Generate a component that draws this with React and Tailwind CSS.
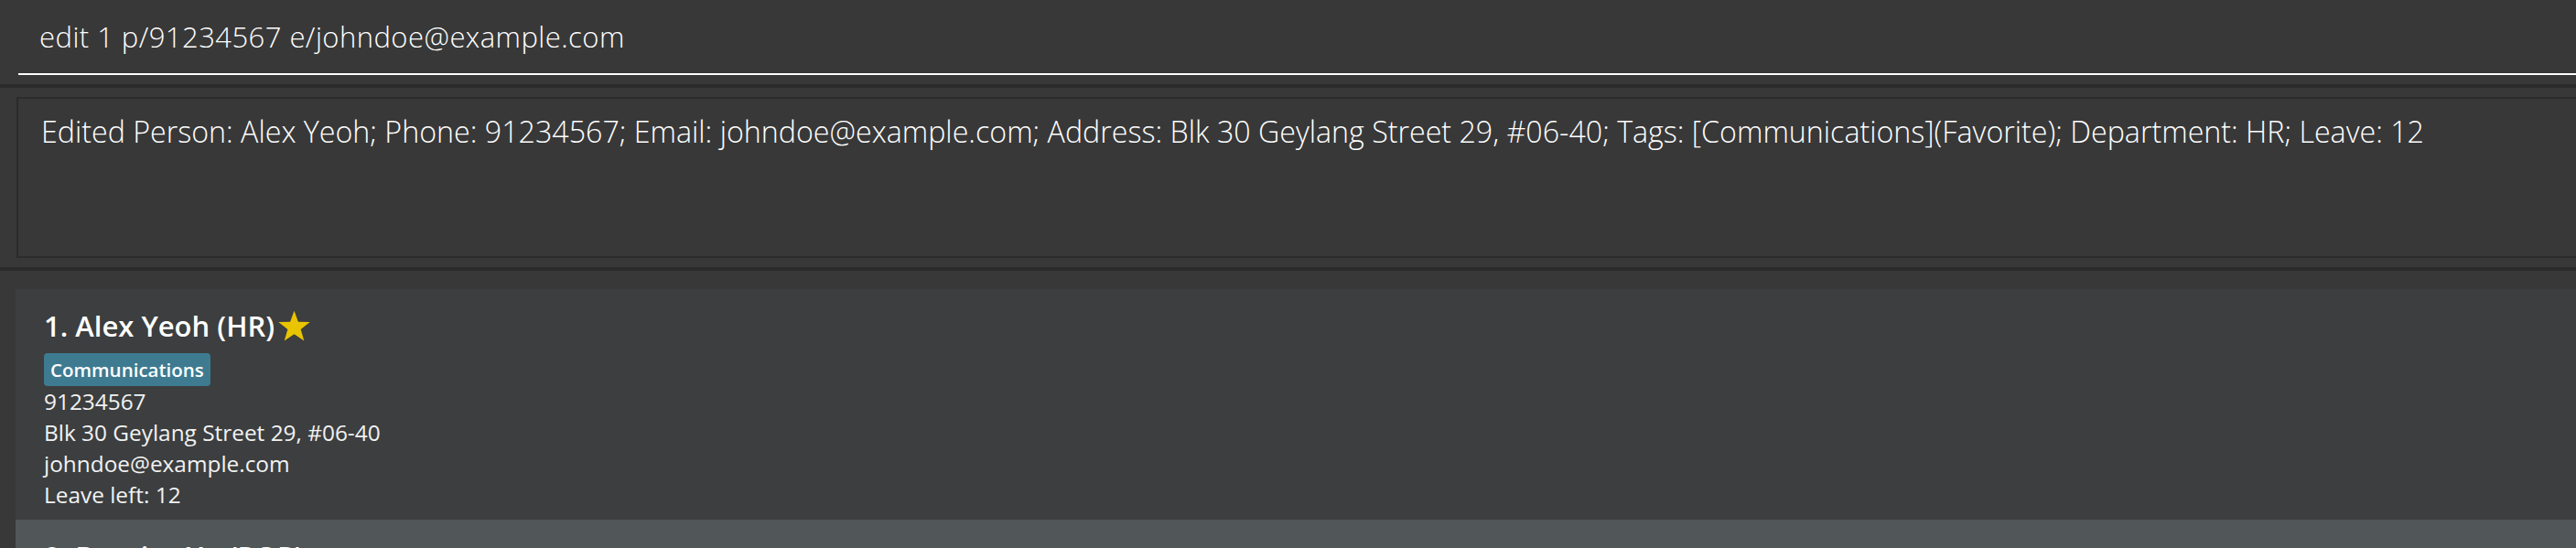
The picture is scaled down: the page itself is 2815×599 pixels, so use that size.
import React from "react";

const persons = [
  {
    id: 1,
    name: "Alex Yeoh",
    dept: "HR",
    favorite: true,
    tags: ["Communications"],
    phone: "91234567",
    address: "Blk 30 Geylang Street 29, #06-40",
    email: "johndoe@example.com",
    leave: 12,
  },
  {
    id: 2,
    name: "Bernice Yu",
    dept: "POP",
    favorite: false,
    tags: [],
    phone: "99272758",
    address: "Blk 30 Lorong 3 Serangoon Gardens, #07-18",
    email: "berniceyu@example.com",
    leave: 14,
  },
];

function Star() {
  return (
    <svg viewBox="0 0 24 23" className="ml-[3px] h-[35px] w-[37px] shrink-0" aria-hidden="true">
      <polygon
        points="12,0.5 14.9,8.4 23.3,8.6 16.7,13.8 19.1,22 12,17.2 4.9,22 7.3,13.8 0.7,8.6 9.1,8.4"
        fill="#e9c400"
      />
    </svg>
  );
}

function PersonCard({ p, index }) {
  const even = index % 2 === 0;
  return (
    <div
      className={`h-[252px] pl-[31px] pt-[20px] text-white ${
        even ? "bg-[#3c3e3f]" : "bg-[#515658]"
      }`}
    >
      <div className="flex items-center">
        <span className="text-[31px] font-semibold leading-[40px]">
          {p.id}. {p.name} ({p.dept})
        </span>
        {p.favorite && <Star />}
      </div>
      <div className="mt-[10px] flex h-[36px] gap-[6px]">
        {p.tags.map((t) => (
          <span
            key={t}
            className="rounded-[4px] bg-[#3e7b91] px-[7px] text-[20.5px] font-semibold leading-[36px]"
          >
            {t}
          </span>
        ))}
      </div>
      <div className="text-[24.4px] leading-[34px] text-[#f2f2f2]">
        <p>{p.phone}</p>
        <p>{p.address}</p>
        <p>{p.email}</p>
        <p>Leave left: {p.leave}</p>
      </div>
    </div>
  );
}

export default function App() {
  return (
    <div className="h-[599px] w-full overflow-hidden bg-[#383838] font-['Open_Sans',sans-serif]">
      {/* command box */}
      <div className="h-[92px] pl-[20px]">
        <div className="h-[82px] border-b-2 border-white pl-[23px] pt-[20px] text-[31px] font-light leading-[40px] tracking-[0.45px] text-white">
          edit 1 p/91234567 e/johndoe@example.com
        </div>
      </div>
      <div className="h-[4px] bg-[#2b2b2b]" />

      {/* result display */}
      <div className="h-[196px] pl-[18px] pt-[10px]">
        <div className="h-[176px] w-[2900px] border-2 border-[#2b2b2b] pl-[25px] pt-[12px]">
          <p className="whitespace-nowrap text-[32.2px] font-light leading-[48px] text-white">
            Edited Person: Alex Yeoh; Phone: 91234567; Email: johndoe@example.com; Address: Blk 30
            Geylang Street 29, #06-40; Tags: [Communications](Favorite); Department: HR; Leave: 12
          </p>
        </div>
      </div>
      <div className="h-[4px] bg-[#2b2b2b]" />

      {/* person list */}
      <div className="pl-[17px] pt-[20px]">
        {persons.map((p, i) => (
          <PersonCard key={p.id} p={p} index={i} />
        ))}
      </div>
    </div>
  );
}
